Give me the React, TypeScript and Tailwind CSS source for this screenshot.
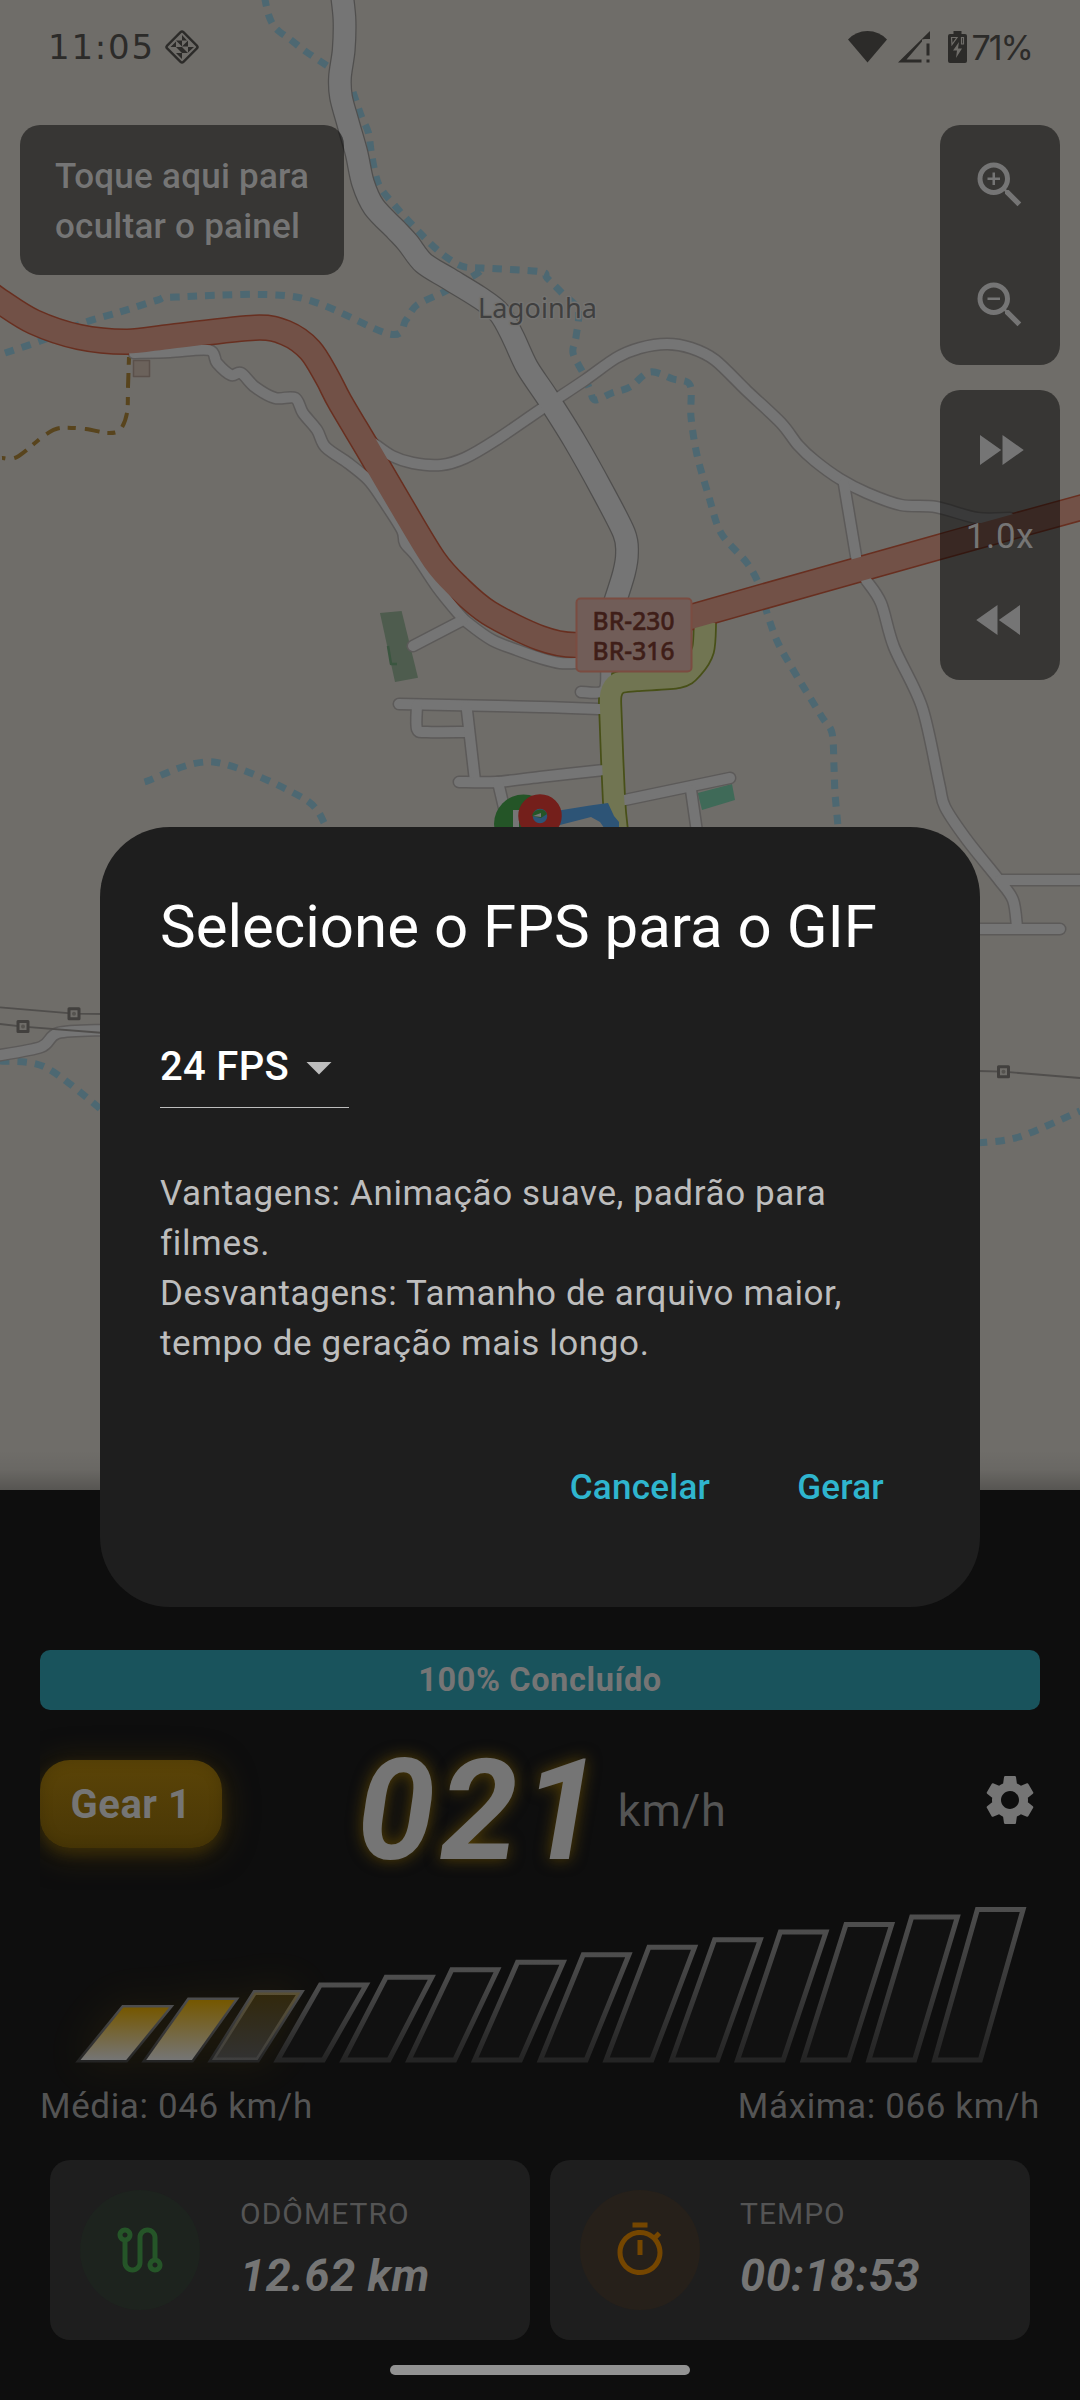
import React from "react";
import {
  MdZoomIn,
  MdZoomOut,
  MdFastForward,
  MdFastRewind,
  MdSettings,
  MdOutlineRoute,
  MdOutlineTimer,
  MdArrowDropDown,
} from "react-icons/md";

type Pt = [number, number];

/** Catmull-Rom spline through the given points. */
function smooth(points: Pt[]): string {
  let d = `M${points[0][0]} ${points[0][1]}`;
  for (let i = 0; i < points.length - 1; i++) {
    const p0 = points[Math.max(0, i - 1)];
    const p1 = points[i];
    const p2 = points[i + 1];
    const p3 = points[Math.min(points.length - 1, i + 2)];
    const k = 6.5;
    d += `C${p1[0] + (p2[0] - p0[0]) / k} ${p1[1] + (p2[1] - p0[1]) / k} ${p2[0] - (p3[0] - p1[0]) / k} ${p2[1] - (p3[1] - p1[1]) / k} ${p2[0]} ${p2[1]}`;
  }
  return d;
}

const avenue: Pt[] = [
  [342, -5], [344.5, 20], [343.7, 50], [340, 77], [341, 97], [348, 123], [356.5, 153], [363, 183],
  [374, 207], [396, 230], [408, 243], [423.6, 263], [447.7, 278], [478.7, 297], [499.4, 313],
  [513, 337], [527, 367], [547, 397], [574, 440], [602, 490], [624, 533], [627, 553], [624, 573], [614, 605],
];

const trunk: Pt[] = [
  [-15, 290], [0, 301], [34, 322], [79, 337], [127, 341.7], [172, 336.7], [255, 327.7], [286, 333], [310, 350],
  [327, 377], [340, 402], [368.5, 450], [399.5, 503], [434, 560], [458, 587], [489, 613], [540, 638],
  [576, 645], [625, 637], [692, 616.7], [940, 546.7], [1085, 506.5],
];

const streets: Pt[][] = [
  [[134, 353], [170, 352], [209, 350], [217, 363], [231, 375], [241, 373], [255, 387], [275, 398], [295, 398], [303, 413], [317, 430], [325.5, 447], [348, 463], [368.5, 480], [383, 500], [402, 530], [405, 543], [417, 557], [437, 587], [458, 613], [468, 623], [492, 640], [517, 650], [540, 658], [560, 663], [580, 663]],
  [[463, 620], [413, 646]],
  [[373, 443], [392, 456], [413, 463], [441, 465], [465, 458], [496, 440], [540, 410], [585, 380], [616, 358], [640, 348], [667, 344], [691, 348], [715, 360], [747, 391], [781, 423], [798, 445], [815, 461], [840, 479], [867, 493], [901, 505], [936, 507], [977, 518], [1010, 518]],
  [[844, 484], [850, 520], [857, 562]],
  [[866, 580], [881, 603], [894, 647], [922, 707], [939, 783], [945, 807], [967, 840], [999, 880], [1013, 900], [1017, 927]],
  [[1000, 880], [1085, 880]],
  [[950, 929], [1060, 929]],
  [[399, 704], [540, 707], [602, 709]],
  [[417, 705], [417, 729], [427, 732], [467, 732]],
  [[466.6, 707], [475, 781]],
  [[459, 782], [496, 782], [540, 777], [604, 770]],
  [[498, 782], [505, 812]],
  [[581, 692], [604, 690], [606, 660]],
  [[620, 801], [730, 778]],
  [[691, 790], [697, 832]],
  [[-5, 1056], [41, 1047], [58, 1033], [104, 1030]],
];

const collector: Pt[] = [
  [705, 622], [703, 650], [692, 668], [678, 677], [636, 680], [618, 683], [610.6, 694], [610.6, 717], [614, 800], [617, 832],
];

const streams: Pt[][] = [
  [[264.5, -3], [268.6, 15], [275.5, 28], [291, 40], [306.5, 52], [329, 67]],
  [[353, 92], [361.6, 117], [368.5, 133], [372, 157], [379, 185], [396, 207], [420, 233], [441, 253], [461.5, 266], [482, 268], [540, 271.7], [547, 278], [562, 293], [578, 310], [576, 337], [573, 353], [583, 373], [590, 390], [595, 400], [612, 393], [630, 387], [650, 372], [673, 379], [690, 385], [691, 417], [697, 455], [709, 497], [721, 533], [747, 563], [760, 587], [767, 613], [778, 643], [795, 673], [822, 717], [832, 733], [834, 767], [835, 793], [838, 826]],
  [[5, 353], [43, 340], [83, 323], [120, 312], [158, 300], [176, 297], [296, 297], [389, 334], [406, 320], [417, 305], [448, 290], [478, 273], [482, 266]],
  [[144.6, 782], [213.5, 762], [303, 798], [325.5, 825]],
  [[0, 1061], [45, 1067], [102, 1110]],
  [[978, 1143], [1019, 1137], [1080, 1111]],
];

const pylons: Pt[] = [[74, 1013.7], [23, 1026.6], [1003.5, 1071.7]];

function CityMap() {
  return (
    <svg className="absolute inset-0 h-full w-full" viewBox="0 0 1080 1490" fill="none" strokeLinejoin="round">
      <defs>
        <linearGradient id="sheetShade" x1="0" y1="0" x2="0" y2="1">
          <stop offset="0" stopColor="#000" stopOpacity="0" />
          <stop offset="0.5" stopColor="#000" stopOpacity="0.05" />
          <stop offset="1" stopColor="#000" stopOpacity="0.22" />
        </linearGradient>
      </defs>
      <rect width="1080" height="1490" fill="#6f6d69" />
      <path d="M380 613L401.6 611L418 677.7L395 682Z" fill="#4e5c4e" />
      <path d="M388 646L391 664L397 664" stroke="#3b5640" strokeWidth="2.500" />
      <path d="M697.7 793L732 784L735 800L702 810Z" fill="#3f6a58" />
      <rect x="133.500" y="360.500" width="16" height="16" fill="#6b625b" stroke="#5b514b" strokeWidth="1.500" />
      {streams.map((s, i) => (
        <path key={i} d={smooth(s)} stroke="#4d6872" strokeWidth="7" strokeDasharray="9.500 8" />
      ))}
      <path
        d={smooth([[129, 357], [128, 387], [127, 413], [120, 430], [107, 433], [86, 429], [60, 428], [45, 435], [17, 457], [2, 458]])}
        stroke="#58441d" strokeWidth="4" strokeDasharray="8 8 15 9"
      />
      <g stroke="#5c5a59" strokeLinecap="round">
        {streets.map((s, i) => <path key={i} d={smooth(s)} strokeWidth="13" />)}
        <path d={smooth(avenue)} strokeWidth="24" stroke="#504f4e" />
      </g>
      <path d={smooth(collector)} stroke="#485018" strokeWidth="24" />
      <path d={smooth(trunk)} stroke="#682f20" strokeWidth="26.500" />
      <g stroke="#757575" strokeLinecap="round">
        {streets.map((s, i) => <path key={i} d={smooth(s)} strokeWidth="10" />)}
        <path d={smooth(avenue)} strokeWidth="21.500" />
      </g>
      <path d={smooth(collector)} stroke="#717552" strokeWidth="20.500" />
      <path d={smooth(trunk)} stroke="#725147" strokeWidth="23.500" />
      <g stroke="#504e4c" strokeWidth="1.800">
        <path d="M0 1007.4L74 1013.7L104 1014M0 1024L23 1026.6L104 1033M978 1071L1003 1071.7L1080 1078" />
      </g>
      {pylons.map(([x, y], i) => (
        <g key={i}>
          <rect x={x - 5} y={y - 5} width="10" height="10" fill="#6f6d69" stroke="#42403e" strokeWidth="3" />
          <circle cx={x} cy={y} r="2" fill="#55534f" />
        </g>
      ))}
      <rect x="576.500" y="598.500" width="115" height="73" rx="4" fill="#715d58" stroke="#7b4c41" strokeWidth="2" />
      <g fontFamily="'Noto Sans', sans-serif" fill="#3f1e18">
        <g fontSize="24.500" fontWeight="500" stroke="#3f1e18" strokeWidth="0.500">
          <text x="592.500" y="630" textLength="82">BR-230</text>
          <text x="592.500" y="660" textLength="82">BR-316</text>
        </g>
        <text x="478" y="318" fontSize="27" fill="#3f3f3f" stroke="#737270" strokeWidth="3" paintOrder="stroke" textLength="119">Lagoinha</text>
      </g>
      <path d="M556 811L590 805.500L608 803L614 816L619 822V832H607L600 822L591 817L556 826Z" fill="#2d5476" />
      <circle cx="523.500" cy="824" r="29.500" fill="#245527" />
      <path d="M513 810H519V840H513Z" fill="#757575" />
      <circle cx="540" cy="816" r="14.500" fill="#2d5476" stroke="#741f1b" strokeWidth="14.500" />
      <path d="M532 816A8 8 0 0 1 547 814L541 818Z" fill="#245527" />
      <path d="M533 816L541 813L541 817Z" fill="#757575" />
      <rect y="1450" width="1080" height="40" fill="url(#sheetShade)" />
    </svg>
  );
}

function StatusBar() {
  return (
    <div className="relative flex h-[125px] justify-between text-[#2c2b29]">
      <div className="flex h-[94px] items-center pl-[48px]">
        <span className="font-['DejaVu_Sans',sans-serif] text-[34px] tracking-[1.8px]">11:05</span>
        <svg className="ml-[8px] h-[38px] w-[38px]" viewBox="0 0 38 38">
          <rect x="7.500" y="7.500" width="23" height="23" rx="2" transform="rotate(45 19 19)" fill="none" stroke="currentColor" strokeWidth="2.400" />
          <path d="M19 7L24 12.500H19ZM13 12.500H19V18.500ZM25 12.500V18.500H19ZM7.500 19L13 13.500V19ZM25 19H31L25 24.500ZM13 19H19V25ZM19 19L25 25H19ZM13 25H19V31Z" fill="currentColor" />
        </svg>
      </div>
      <div className="flex h-[94px] items-center pr-[48px]">
        <svg className="h-[32px] w-[39px]" viewBox="0 0 39 32">
          <path d="M0 8.500Q8 0 19.500 0T39 8.500L19.500 31.500Z" fill="currentColor" />
        </svg>
        <svg className="ml-[11px] h-[32px] w-[33px]" viewBox="0 0 33 32">
          <path d="M0 31.500L32 0V8H27L24 8.500V10.500L8.500 28.500H23.500V31.500ZM28.500 12.500H31.500V24.500H28.500ZM28.500 28.500H31.500V31.500H28.500Z" fill="currentColor" />
        </svg>
        <svg className="ml-[17px] h-[32px] w-[19px]" viewBox="0 0 19 32">
          <path d="M5.500 0H13.500V3H17Q19 3 19 5V30Q19 32 17 32H2Q0 32 0 30V5Q0 3 2 3H5.500Z" fill="currentColor" />
          <path d="M11 11L5 19.500H9L8 27L14 17.500H10Z" fill="#6f6d69" />
          <path d="M3.500 6.500H9L4 13.500ZM13.500 6.500H15.500V13H13.500Z" fill="none" stroke="#6f6d69" strokeWidth="1.200" />
        </svg>
        <span className="ml-[5px] font-['Inter',sans-serif] text-[34px] tracking-[-2px]">71%</span>
      </div>
    </div>
  );
}

function MapControls() {
  return (
    <div className="relative flex items-start justify-between px-5">
      <div className="w-[324px] rounded-[20px] bg-black/50 pt-[27px] pb-[23px] pl-[35px] text-[35px] leading-[50px] font-medium tracking-[0.25px] text-[#757575]">
        Toque aqui para
        <br />
        ocultar o painel
      </div>
      <div className="flex w-[120px] flex-col gap-[25px] text-[#757575]">
        <div className="flex flex-col rounded-[20px] bg-black/50">
          <button className="flex h-[120px] items-center justify-center"><MdZoomIn size={60} /></button>
          <button className="flex h-[120px] items-center justify-center"><MdZoomOut size={60} /></button>
        </div>
        <div className="flex flex-col rounded-[20px] bg-black/50">
          <button className="flex h-[120px] items-center justify-center"><MdFastForward size={60} /></button>
          <span className="h-[50px] text-center text-[35px] leading-[53px] tracking-[0.6px]">1.0x</span>
          <button className="flex h-[120px] items-center justify-center"><MdFastRewind size={60} /></button>
        </div>
      </div>
    </div>
  );
}

const BARS = Array.from({ length: 14 }, (_, i) => {
  const x = 40.5 + i * 65.7;
  const top = 117.5 - i * 7.54;
  return `M${x} 170H${x + 45.7}L${x + 88.5} ${top}H${x + 42.8}Z`;
});

function Tachometer() {
  return (
    <svg className="h-[190px] w-[1000px] overflow-visible" viewBox="0 0 1000 190">
      <defs>
        <linearGradient id="barStroke" x1="0" y1="0" x2="0" y2="1">
          <stop offset="0" stopColor="#4d4d4d" />
          <stop offset="1" stopColor="#242424" />
        </linearGradient>
        <linearGradient id="barFill" x1="0" y1="0" x2="0" y2="1">
          <stop offset="0" stopColor="#755700" />
          <stop offset="1" stopColor="#757575" />
        </linearGradient>
        <filter id="barGlow" x="-100%" y="-100%" width="300%" height="300%">
          <feGaussianBlur stdDeviation="22" />
        </filter>
      </defs>
      <g filter="url(#barGlow)" fill="#755700" opacity="0.22">
        {BARS.slice(0, 3).map((d, i) => <path key={i} d={d} />)}
      </g>
      {BARS.map((d, i) => (
        <g key={i}>
          <path d={d} fill="#111111" stroke="url(#barStroke)" strokeWidth="5" />
          {i < 3 && <path d={d} fill="url(#barFill)" opacity={i === 2 ? 0.33 : 1} />}
        </g>
      ))}
    </svg>
  );
}

function StatCard({ icon, tint, label, value }: { icon: React.ReactNode; tint: string; label: string; value: string }) {
  return (
    <div className="flex h-[180px] flex-1 items-center rounded-[20px] bg-[#1e1e1e] pl-[30px]">
      <div className={`flex h-[120px] w-[120px] items-center justify-center rounded-full ${tint}`}>{icon}</div>
      <div className="ml-[40px] flex flex-col gap-[12px]">
        <span className="text-[30px] leading-[40px] tracking-[1px] text-[#545454]">{label}</span>
        <span className="text-[45px] leading-[60px] font-bold tracking-[0.6px] text-[#757575] italic">{value}</span>
      </div>
    </div>
  );
}

function Dashboard() {
  return (
    <section className="flex h-[910px] flex-col bg-[#0e0e0e] px-10 pt-[160px]">
      <div className="flex h-[60px] items-center justify-center rounded-[10px] bg-[#19535c] text-[32.5px] font-bold tracking-[0.6px] text-[#757575]">
        100% Concluído
      </div>
      <div className="relative mt-[10px] flex h-[170px] items-center justify-between">
        <div className="flex h-[170px] w-[250px] items-center overflow-hidden pb-[3px]">
          <div className="flex h-[88px] w-[182px] items-center justify-center rounded-[30px] bg-linear-to-b from-[#5b4407] to-[#493706] pt-[2px] text-[40px] font-bold tracking-[0.5px] text-[#757575] shadow-[0_5px_32px_1px_#49370699,inset_0_0_14px_#00000026,0_6px_12px_#49370680]">
            Gear 1
          </div>
        </div>
        <div className="absolute left-[317px] flex items-baseline pt-[11px]">
          <span className="text-[140px] leading-[170px] font-bold tracking-[5px] text-[#757575] italic [text-shadow:0_0_16px_#755700b3]">021</span>
          <span className="ml-[12px] -translate-y-[33px] text-[45px] tracking-[0.8px] text-[#545454]">km/h</span>
        </div>
        <MdSettings size={60} className="mb-[10px] text-[#757575]" />
      </div>
      <Tachometer />
      <div className="flex h-[50px] justify-between text-[35px] leading-[53px] tracking-[0.625px] text-[#545454]">
        <span>Média: 046 km/h</span>
        <span>Máxima: 066 km/h</span>
      </div>
      <div className="mt-[30px] flex gap-5 px-[10px]">
        <StatCard tint="bg-[#1d231e]" icon={<MdOutlineRoute size={60} color="#255528" />} label="ODÔMETRO" value="12.62 km" />
        <StatCard tint="bg-[#26201a]" icon={<MdOutlineTimer size={60} color="#754600" />} label="TEMPO" value="00:18:53" />
      </div>
      <div className="mt-[25px] h-[10px] w-[300px] self-center rounded-full bg-[#929292]" />
    </section>
  );
}

function FpsDialog() {
  return (
    <div role="dialog" className="absolute top-[827px] left-[100px] flex h-[780px] w-[880px] flex-col rounded-[70px] bg-[#1e1e1e] p-[60px]">
      <h1 className="text-[60px] leading-[80px] text-white">Selecione o FPS para o GIF</h1>
      <div className="mt-[40px] flex h-[101px] w-[189px] shrink-0 items-center border-b border-[#bdbdbd] pt-[19px] text-[#bdbdbd]">
        <span className="text-[40px] leading-[60px] font-medium tracking-[0.3px] whitespace-nowrap text-white">24 FPS</span>
        <MdArrowDropDown size={60} className="ml-auto shrink-0" />
      </div>
      <p className="mt-[61px] text-[35px] leading-[50px] tracking-[0.625px] text-[#bdbdbd]">
        Vantagens: Animação suave, padrão para
        <br />
        filmes.
        <br />
        Desvantagens: Tamanho de arquivo maior,
        <br />
        tempo de geração mais longo.
      </p>
      <div className="mt-[61px] flex h-[120px] items-center justify-end gap-[87px] pr-[36px] text-[35px] font-medium tracking-[0.25px] text-[#2fb5ce]">
        <button>Cancelar</button>
        <button>Gerar</button>
      </div>
    </div>
  );
}

export default function App() {
  return (
    <main className="relative flex h-[2400px] w-[1080px] flex-col overflow-hidden bg-[#0e0e0e] font-['Roboto',sans-serif]">
      <section className="relative h-[1490px]">
        <CityMap />
        <StatusBar />
        <MapControls />
      </section>
      <Dashboard />
      <FpsDialog />
    </main>
  );
}
